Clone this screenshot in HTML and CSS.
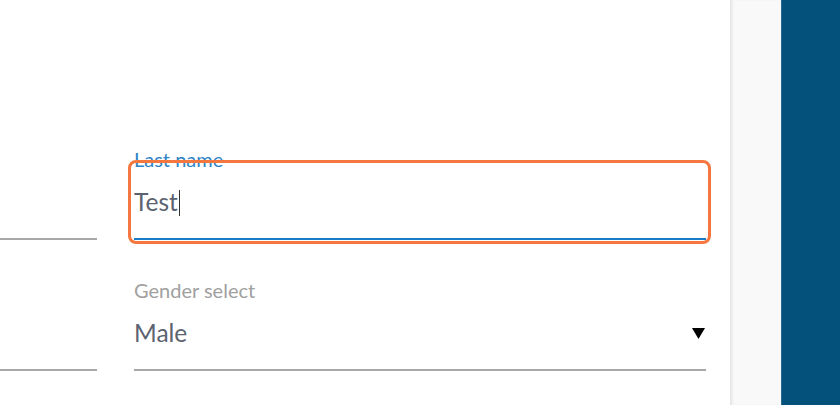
FILE: index.html
```html
<!DOCTYPE html>
<html lang="en">
<head>
<meta charset="utf-8">
<title>Form</title>
<link rel="stylesheet" href="styles.css">
</head>
<body>
<div class="page">
  <main class="panel">
    <div class="form-grid">
      <div class="field field-left">
        <div class="label">&nbsp;</div>
        <div class="value">&nbsp;</div>
      </div>
      <div class="field field-focus">
        <div class="label label-active">Last name</div>
        <div class="value">Test<span class="caret"></span></div>
        <div class="focus-ring"></div>
      </div>
      <div class="field field-left row2">
        <div class="label">&nbsp;</div>
        <div class="value">&nbsp;</div>
      </div>
      <div class="field row2">
        <div class="label">Gender select</div>
        <div class="value value-select">
          <span>Male</span>
          <svg class="arrow" width="13" height="11" viewBox="0 0 13 11"><polygon points="0,0 13,0 6.5,11" fill="#000"/></svg>
        </div>
      </div>
    </div>
  </main>
  <aside class="strip"></aside>
  <aside class="navy"></aside>
</div>
</body>
</html>
```

FILE: styles.css
```css
html, body {
  margin: 0;
  padding: 0;
  height: 100%;
}
body {
  font-family: Lato, "Noto Sans", sans-serif;
  background: #ffffff;
  overflow: hidden;
}
.page {
  display: flex;
  height: 405px;
  width: 840px;
}
.panel {
  width: 730px;
  flex: none;
  background: #ffffff;
  padding-top: 149px;
  box-sizing: border-box;
}
.form-grid {
  display: grid;
  grid-template-columns: 97px 572px;
  column-gap: 37px;
  row-gap: 40px;
}
.field {
  position: relative;
  border-bottom: 2px solid #a8a8a8;
  padding-bottom: 21px;
}
.field-focus {
  border-bottom-color: #1a7cc6;
}
.label {
  font-size: 20px;
  line-height: 20px;
  height: 20px;
  color: #a0a0a0;
  margin-bottom: 18px;
  white-space: nowrap;
}
.label-active {
  color: #2f84c6;
}
.value {
  font-size: 24.5px;
  line-height: 30px;
  height: 30px;
  color: #5b6270;
  white-space: nowrap;
}
.caret {
  display: inline-block;
  width: 1px;
  height: 26px;
  background: #333;
  vertical-align: -5px;
  margin-left: 1px;
}
.value-select {
  display: flex;
  justify-content: space-between;
  align-items: flex-start;
}
.arrow {
  margin-top: 10px;
  margin-right: 1px;
}
.focus-ring {
  position: absolute;
  left: -6px;
  right: -5px;
  top: 11px;
  bottom: -6px;
  border: 3px solid #f4773f;
  border-radius: 8px;
  pointer-events: none;
}
.strip {
  width: 51px;
  flex: none;
  background: #f9f9fa;
  box-shadow: inset 3px 0 3px -1px rgba(0, 0, 0, 0.09);
}
.navy {
  flex: 1;
  background: #04527b;
  border-left: 1px solid #2b6a8f;
}
```
